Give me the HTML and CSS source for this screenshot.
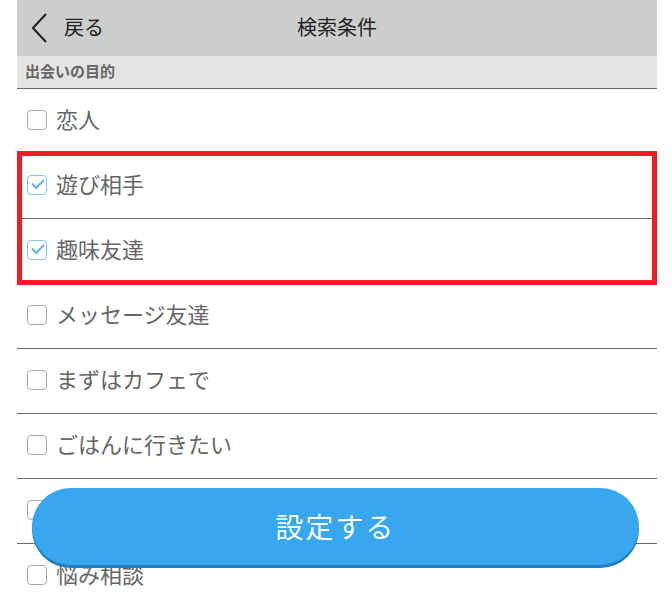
FILE: index.html
```html
<!DOCTYPE html>
<html lang="ja">
<head>
    <meta charset="UTF-8">
    <meta name="viewport" content="width=device-width, initial-scale=1.0">
    <title>検索条件</title>
    <link rel="stylesheet" href="styles.css">
</head>
<body>
    <div class="page">
        <!-- ヘッダー -->
        <div class="header">
            <a class="back" href="#">
                <svg class="chevron" width="16" height="30" viewBox="0 0 16 30">
                    <polyline points="14,1 1,15 14,29" fill="none" stroke="#222" stroke-width="2"/>
                </svg>
                <span>戻る</span>
            </a>
            <h1 class="title">検索条件</h1>
        </div>

        <div class="section-title">出会いの目的</div>

        <ul class="options">
            <li class="option"><span class="check"></span><span class="label">恋人</span></li>
            <li class="option"><span class="check checked"></span><span class="label">遊び相手</span></li>
            <li class="option"><span class="check checked"></span><span class="label">趣味友達</span></li>
            <li class="option"><span class="check"></span><span class="label">メッセージ友達</span></li>
            <li class="option"><span class="check"></span><span class="label">まずはカフェで</span></li>
            <li class="option"><span class="check"></span><span class="label">ごはんに行きたい</span></li>
            <li class="option"><span class="check"></span><span class="label">飲み友達</span></li>
            <li class="option"><span class="check"></span><span class="label">悩み相談</span></li>
        </ul>

        <!-- 強調枠 -->
        <div class="highlight"></div>
    </div>

    <button class="submit">設定する</button>
</body>
</html>
```

FILE: styles.css
```css
body {
    margin: 0;
    padding: 0;
    background-color: #fff;
    font-family: "Noto Sans CJK JP", "Noto Sans", sans-serif;
    overflow: hidden;
}
.page {
    position: relative;
    margin: 0 15px 0 17px;
}
.header {
    position: relative;
    height: 56px;
    background-color: #cccecd;
    display: flex;
    align-items: center;
    justify-content: center;
    padding-bottom: 4px;
    box-sizing: border-box;
}
.back {
    position: absolute;
    left: 15px;
    top: 13px;
    display: flex;
    align-items: center;
    gap: 16px;
    color: #222;
    text-decoration: none;
    font-size: 20px;
}
.back span {
    position: relative;
    top: -2px;
}
.chevron {
    display: block;
}
.title {
    margin: 0;
    font-size: 20px;
    font-weight: normal;
    color: #222;
}
.section-title {
    height: 32px;
    line-height: 29px;
    padding-left: 8px;
    background-color: #e4e4e4;
    border-bottom: 1px solid #666;
    font-size: 15px;
    font-weight: bold;
    color: #666;
}
.options {
    list-style: none;
    margin: 0;
    padding: 0;
}
.option {
    height: 65px;
    display: flex;
    align-items: center;
    gap: 9px;
    padding-left: 10px;
    padding-bottom: 3px;
    box-sizing: border-box;
    border-bottom: 1px solid #666;
    font-size: 22px;
    color: #666;
}
.label {
    position: relative;
    top: -2px;
}
.check {
    width: 18px;
    height: 18px;
    border: 1px solid #aaa;
    border-radius: 4px;
    box-sizing: content-box;
    position: relative;
}
.check.checked {
    border-color: #82c6f3;
}
.check.checked::after {
    content: "";
    position: absolute;
    left: 4px;
    top: 3px;
    width: 10px;
    height: 5px;
    border-left: 2px solid #5fb2ea;
    border-bottom: 2px solid #5fb2ea;
    transform: rotate(-45deg);
}
.highlight {
    position: absolute;
    left: 0;
    right: 0;
    top: 151px;
    height: 124px;
    border: 5px solid #ee1c25;
}
.submit {
    position: fixed;
    left: 32px;
    top: 488px;
    width: 607px;
    height: 77px;
    border: none;
    border-radius: 39px;
    background-color: #38a7f0;
    box-shadow: 0 3px 0 #1f7fc0;
    color: #fff;
    font-family: "Noto Sans CJK JP", "Noto Sans", sans-serif;
    font-size: 28px;
    letter-spacing: 2px;
    padding-bottom: 3px;
    cursor: pointer;
}
```
